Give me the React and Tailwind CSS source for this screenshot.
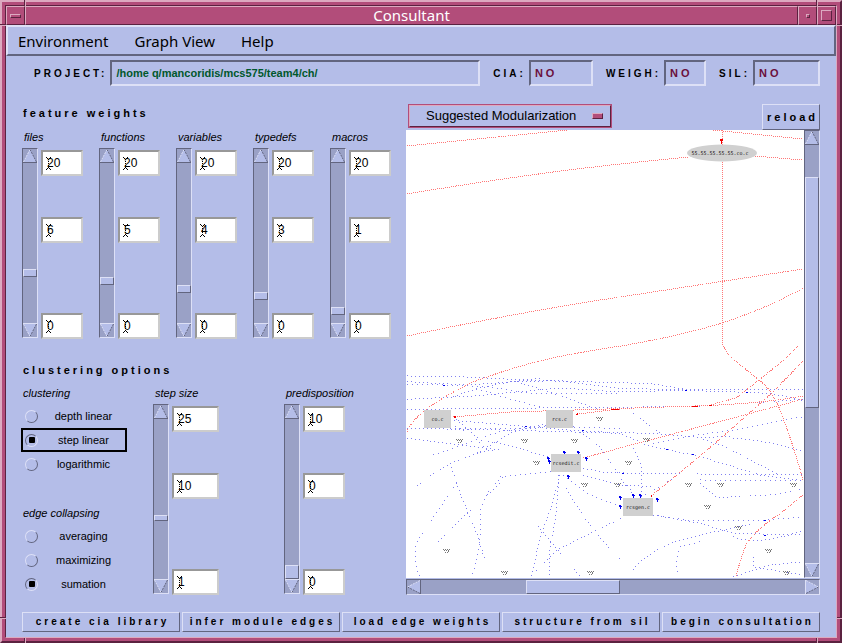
import React from "react";

const RAISED =
  "border-t-[#dde0f6] border-l-[#dde0f6] border-r-[#62657f] border-b-[#62657f]";
const SUNKEN =
  "border-t-[#62657f] border-l-[#62657f] border-r-[#dde0f6] border-b-[#dde0f6]";

const THUMB_H = {
  small: "[&::-webkit-slider-thumb]:h-[6px]",
  normal: "[&::-webkit-slider-thumb]:h-[8px]",
  large: "[&::-webkit-slider-thumb]:h-[14px]",
};

const THUMB =
  "appearance-none bg-transparent m-0 p-0 outline-none [&::-webkit-slider-thumb]:appearance-none [&::-webkit-slider-thumb]:rounded-none [&::-webkit-slider-thumb]:bg-[#b4bde8] [&::-webkit-slider-thumb]:border [&::-webkit-slider-thumb]:border-t-[#dde0f6] [&::-webkit-slider-thumb]:border-l-[#dde0f6] [&::-webkit-slider-thumb]:border-r-[#62657f] [&::-webkit-slider-thumb]:border-b-[#62657f]";

const ROTATE = { up: 0, down: 180, left: -90, right: 90 };

function Stepper({ dir, label }) {
  const light = "#dde0f6";
  const dark = "#62657f";
  const edges = {
    up: [light, dark, dark],
    down: [dark, light, light],
    left: [dark, light, dark],
    right: [light, dark, light],
  }[dir];
  return (
    <button type="button" aria-label={label} className="block h-[14px] w-[14px] shrink-0">
      <svg viewBox="0 0 14 14" className="block h-[14px] w-[14px]">
        <g transform={`rotate(${ROTATE[dir]} 7 7)`}>
          <path d="M7 0L13.5 13.5H0.5Z" fill="#b4bde8" />
          <path d="M0.5 13L7 0.5" stroke={edges[0]} strokeDasharray="2 1" fill="none" />
          <path d="M7 0.5L13.5 13" stroke={edges[1]} strokeDasharray="2 1" fill="none" />
          <path d="M0 13.5H14" stroke={edges[2]} fill="none" />
        </g>
      </svg>
    </button>
  );
}

function VerticalScale({ id, label, min, max, value, thumb }) {
  return (
    <div className={`flex h-[190px] w-4 flex-col items-center border bg-[#9aa1c6] ${SUNKEN}`}>
      <Stepper dir="up" label={`Increase ${label}`} />
      <input
        id={id}
        type="range"
        min={min}
        max={max}
        defaultValue={value}
        className={`min-h-0 w-[14px] flex-1 [direction:rtl] [writing-mode:vertical-lr] [&::-webkit-slider-thumb]:w-[14px] ${THUMB} ${THUMB_H[thumb]}`}
      />
      <Stepper dir="down" label={`Decrease ${label}`} />
    </div>
  );
}

function NumberField({ value, label, wide }) {
  return (
    <div className="relative">
      <input
        type="text"
        aria-label={label}
        defaultValue={value}
        className={`block h-[26px] border-2 border-t-[#989898] border-r-[#cccccc] border-b-[#cccccc] border-l-[#989898] bg-white pl-1 text-[12px] leading-4 text-black outline-none ${wide ? "w-[47px]" : "w-[42px]"}`}
      />
      <svg viewBox="0 0 5 13" className="pointer-events-none absolute top-[7px] left-[5px] h-[13px] w-[5px]" shapeRendering="crispEdges">
        <path d="M0 .5H1M1 1.5H2M3 1.5H4M4 .5H5M0 12.5H1M1 11.5H2M3 11.5H4M4 12.5H5" stroke="#000" />
        <path d="M2.5 2V12" stroke="#000" strokeDasharray="1 1" />
      </svg>
    </div>
  );
}

function Scale({ name, min, max, value, thumb = "normal", wide }) {
  const id = `scale-${name.replace(" ", "-")}`;
  return (
    <div className="flex flex-col">
      <label htmlFor={id} className="mb-[3px] block h-4 pl-0.5 text-[11px] leading-4 italic">
        {name}
      </label>
      <div className="flex gap-[3px]">
        <VerticalScale id={id} label={name} min={min} max={max} value={value} thumb={thumb} />
        <div className="flex flex-col pt-0.5">
          <NumberField value={max} label={`${name} maximum`} wide={wide} />
          <div className="h-[41px]" />
          <NumberField value={value} label={`${name} value`} wide={wide} />
          <div className="h-[70px]" />
          <NumberField value={min} label={`${name} minimum`} wide={wide} />
        </div>
      </div>
    </div>
  );
}

function RadioGroup({ legend, name, options, selected, focused }) {
  return (
    <fieldset>
      <legend className="block h-4 pl-0.5 text-[11px] leading-4 italic">{legend}</legend>
      <div className="mt-[3px]">
        {options.map((option) => (
          <label
            key={option}
            className={`flex h-6 w-[106px] items-center border-2 pl-0.5 text-[11px] ${option === focused ? "border-black" : "border-transparent"}`}
          >
            <input
              type="radio"
              name={name}
              defaultChecked={option === selected}
              className="m-0 grid h-[13px] w-[13px] shrink-0 appearance-none place-items-center rounded-full border border-t-[#dde0f6] border-r-[#62657f] border-b-[#62657f] border-l-[#dde0f6] checked:border-t-[#62657f] checked:border-r-[#dde0f6] checked:border-b-[#dde0f6] checked:border-l-[#62657f] checked:before:h-[6px] checked:before:w-[6px] checked:before:rounded-[1px] checked:before:bg-black"
            />
            <span className="flex-1 pl-1 text-center">{option}</span>
          </label>
        ))}
      </div>
    </fieldset>
  );
}

function Status({ id, label, value, className }) {
  return (
    <div className="flex items-center">
      <label htmlFor={id} className="pr-[3px] text-[10px] font-bold tracking-[3px]">
        {label}
      </label>
      <input
        id={id}
        readOnly
        defaultValue={value}
        className={`h-[26px] border-2 bg-transparent pl-1 text-[11px] font-bold tracking-[3px] text-[#6b0f3c] outline-none ${SUNKEN} ${className}`}
      />
    </div>
  );
}

const RED_EDGES = [
  "M407 146L567 130",
  "M407 194Q520 175 620 164L688 157M755 156L803 160",
  "M713 130L803 139",
  "M722 130V340Q723 350 733 359L759 380Q770 388 778 405Q792 440 803 480",
  "M407 336Q520 312 620 297L803 269",
  "M803 288Q770 307 722 323Q680 336 621 346Q580 352 548 359Q510 368 473 382Q415 410 407 432",
  "M798 346L785 359L759 380L736 398L710 405",
  "M803 361L773 392L728 432L699 457L651 496",
  "M453 417L510 412L606 409L694 406Q760 404 803 396",
  "M577 414L620 409",
  "M583 458L620 448L778 406L803 399",
  "M803 495L781 513Q755 530 746 545Q740 560 736 577",
];

// Drawn at three units to the pixel, from the point (400, 360) of the graph.
const BLUE_EDGES = [
  "M20 48L170 50L420 62L663 68L760 72L860 88",
  "M20 65L200 75L340 65L480 62L660 85L780 88L1210 88",
  "M20 75L130 75L260 80L400 102L663 100",
  "M20 118L220 108L480 84L663 96L850 91L1040 97Q1150 100 1210 125",
  "M20 150L160 146L663 142L900 138L1100 126L1210 118",
  "M200 75Q330 120 420 140",
  "M350 65Q480 105 600 150",
  "M150 180L330 195L560 215L663 217L780 222L900 232L1000 230",
  "M150 205L410 205L500 180",
  "M20 235L100 245L300 270",
  "M230 280L340 215L440 190",
  "M100 285L300 215L400 200L660 205",
  "M20 205L300 210L660 220L740 255L900 290L1080 345L1210 362",
  "M520 200L600 260L680 380L700 405",
  "M300 350L460 335",
  "M550 325L620 338L840 342",
  "M890 342L1210 345",
  "M900 360L1210 362",
  "M480 345Q460 430 420 530L395 650",
  "M475 345Q475 450 450 560V650",
  "M490 345L560 400L650 435",
  "M500 385Q560 500 663 600",
  "M310 380L390 470L540 650",
  "M310 350Q240 400 240 480Q245 570 215 650",
  "M150 310L180 400L230 520L255 600",
  "M300 370L180 480L115 545",
  "M170 370L60 530Q30 580 60 650",
  "M280 270Q120 300 20 410",
  "M663 475L470 570L400 640",
  "M760 465L860 480L1080 482L1210 470",
  "M760 465L900 490L1000 520L1210 525",
  "M690 640Q750 560 880 530L1060 490",
  "M900 545L840 560L830 600L832 640",
  "M1000 650L1110 615L1210 605",
  "M1060 590V620L1210 645",
  "M760 250L860 230L1000 210L1130 185L1210 170",
  "M1000 235Q1100 240 1210 275",
  "M900 370L950 412L1030 410",
  "M1050 408L1130 403L1210 385",
  "M700 160L780 220",
  "M700 265L725 320V400",
  "M663 350L700 400",
  "M160 170L240 240L300 250L445 290",
  "M1130 340Q1050 300 980 262L900 235",
  "M670 440L760 390L830 350",
  "M1000 530Q1080 560 1210 510",
  "M160 110Q260 70 420 55",
  "M150 190Q230 230 260 270",
  "M550 345L660 375L760 380",
];

const BLUE_MARKS = [
  [563, 451], [577, 451], [547, 457], [548, 460], [585, 457], [567, 475], [632, 494],
  [639, 494], [656, 498], [619, 496], [619, 505],
];

const BLUE_DASHES = [
  [443, 385], [525, 426], [685, 390], [746, 392], [692, 454], [764, 535], [764, 520],
  [582, 430], [666, 449], [622, 473],
];

const SPECKS = [
  [459, 441], [524, 441], [574, 441], [599, 419], [536, 463], [584, 485], [617, 485],
  [646, 440], [628, 463], [688, 485], [720, 485], [707, 507], [738, 528], [768, 551],
  [786, 573], [793, 485], [446, 551], [504, 573], [590, 573],
];

const BOXES = [
  { x: 424, y: 410, w: 27, h: 18, text: "co.c" },
  { x: 546, y: 410, w: 27, h: 18, text: "rcs.c" },
  { x: 551, y: 454, w: 30, h: 18, text: "rcsedit.c" },
  { x: 623, y: 498, w: 30, h: 18, text: "rcsgen.c" },
];

function Graph() {
  return (
    <svg
      viewBox="406 130 398 448"
      preserveAspectRatio="xMidYMid slice"
      className="block h-[448px] min-w-0 flex-1 bg-white"
      role="img"
      aria-label="Module dependency graph"
    >
      <g fill="none" stroke="#8080f0" strokeWidth="3" shapeRendering="crispEdges" transform="translate(400 360) scale(0.333333)">
        {BLUE_EDGES.map((d, i) => (
          <path key={d} d={d} strokeDasharray={i % 3 === 2 ? "3 12" : "3 9"} />
        ))}
      </g>
      <g fill="none" stroke="#ff7878" strokeWidth="1" strokeDasharray="1 1" shapeRendering="crispEdges">
        {RED_EDGES.map((d) => (
          <path key={d} d={d} />
        ))}
      </g>
      <g fill="#0000f0" shapeRendering="crispEdges">
        {BLUE_MARKS.map(([x, y]) => (
          <path key={`${x}-${y}`} d={`M${x} ${y}h2v1h1v1h-1v2h-1v-2h-1z`} />
        ))}
        {BLUE_DASHES.map(([x, y]) => (
          <path key={`${x}-${y}`} d={`M${x} ${y}h2v1h-2z`} />
        ))}
      </g>
      <g fill="#f00000" shapeRendering="crispEdges">
        <path d="M720 139h3v2h-1v3h-1v-3h-1zM452 417l4 -1v2zM575 415l3 -2v2zM650 496l2 -1v2zM611 409h8v1h-8zM692 406h6v1h-6zM709 405h3v1h-3z" />
      </g>
      <g fill="#d0d0d0">
        <ellipse cx="722" cy="153" rx="35" ry="8.5" />
        {BOXES.map((b) => (
          <rect key={b.text} x={b.x} y={b.y} width={b.w} height={b.h} />
        ))}
      </g>
      <g className="font-['DejaVu_Sans_Mono',monospace] text-[5px]" fill="#111" textAnchor="middle">
        <text x="720" y="155">55.55.55.55.55.co.c</text>
        {BOXES.map((b) => (
          <text key={b.text} x={b.x + b.w / 2} y={b.y + 11}>
            {b.text}
          </text>
        ))}
      </g>
      <g stroke="#777" strokeWidth="1" shapeRendering="crispEdges" fill="none" strokeDasharray="1 1">
        {SPECKS.map(([x, y]) => (
          <path key={`${x}-${y}`} d={`M${x - 3} ${y - 1.5}h7M${x - 2} ${y - 0.5}h5M${x + 2} ${y + 0.5}h2M${x - 1} ${y + 1.5}h4`} />
        ))}
      </g>
    </svg>
  );
}

const FEATURES = [
  { name: "files", value: 6 },
  { name: "functions", value: 5 },
  { name: "variables", value: 4 },
  { name: "typedefs", value: 3 },
  { name: "macros", value: 1 },
];

const ACTIONS = [
  "create cia library",
  "infer module edges",
  "load edge weights",
  "structure from sil",
  "begin consultation",
];

const TITLE_BUTTON =
  "grid h-[19px] w-[19px] place-items-center border border-t-[#dcaac0] border-l-[#dcaac0] border-r-[#5b2240] border-b-[#5b2240]";

function TitleBar() {
  return (
    <header className="flex h-[19px] bg-[#b24d7a] text-white">
      <button type="button" aria-label="Window menu" className={TITLE_BUTTON}>
        <span className="block h-1 w-[11px] border border-t-[#dcaac0] border-r-[#5b2240] border-b-[#5b2240] border-l-[#dcaac0]" />
      </button>
      <h1 className="flex-1 border border-t-[#dcaac0] border-r-[#5b2240] border-b-[#5b2240] border-l-[#dcaac0] text-center font-['Noto_Sans',sans-serif] text-[15px] leading-[17px]">
        Consultant
      </h1>
      <button type="button" aria-label="Minimize" className={TITLE_BUTTON}>
        <span className="block h-1 w-1 border border-t-[#dcaac0] border-r-[#5b2240] border-b-[#5b2240] border-l-[#dcaac0]" />
      </button>
      <button type="button" aria-label="Maximize" className={TITLE_BUTTON}>
        <span className="block h-[11px] w-[11px] border border-t-[#dcaac0] border-r-[#5b2240] border-b-[#5b2240] border-l-[#dcaac0]" />
      </button>
    </header>
  );
}

export default function App() {
  return (
    <div className="relative flex min-h-screen flex-col border-2 border-t-[#dcaac0] border-r-[#5b2240] border-b-[#5b2240] border-l-[#dcaac0] bg-[#b24d7a] p-[3px] font-['Liberation_Sans',Arial,sans-serif] text-black">
      <span className="absolute top-[-2px] left-[22px] h-[6px] w-0.5 border-r border-l border-r-[#dcaac0] border-l-[#5b2240]" />
      <span className="absolute top-[-2px] right-[22px] h-[6px] w-0.5 border-r border-l border-r-[#dcaac0] border-l-[#5b2240]" />
      <span className="absolute bottom-[-2px] left-[22px] h-[5px] w-0.5 border-r border-l border-r-[#dcaac0] border-l-[#5b2240]" />
      <span className="absolute right-[22px] bottom-[-2px] h-[5px] w-0.5 border-r border-l border-r-[#dcaac0] border-l-[#5b2240]" />
      <span className="absolute top-[22px] left-[-2px] h-0.5 w-[6px] border-t border-b border-t-[#5b2240] border-b-[#dcaac0]" />
      <span className="absolute top-[22px] right-[-2px] h-0.5 w-[5px] border-t border-b border-t-[#5b2240] border-b-[#dcaac0]" />
      <span className="absolute bottom-[22px] left-[-2px] h-0.5 w-[6px] border-t border-b border-t-[#5b2240] border-b-[#dcaac0]" />
      <span className="absolute right-[-2px] bottom-[22px] h-0.5 w-[5px] border-t border-b border-t-[#5b2240] border-b-[#dcaac0]" />

      <div className="flex flex-1 flex-col border border-t-[#5b2240] border-r-[#dcaac0] border-b-[#dcaac0] border-l-[#5b2240] bg-[#b4bde8]">
        <TitleBar />
        <nav className={`flex h-[31px] items-center gap-[26px] border-2 pl-[10px] font-['Noto_Sans',sans-serif] text-[15px] leading-5 ${RAISED}`}>
          <button type="button">Environment</button>
          <button type="button">Graph View</button>
          <button type="button">Help</button>
        </nav>

        <div className="mt-1 flex items-center gap-[13px] pr-4 pl-7">
          <div className="flex flex-1 items-center">
            <label htmlFor="project" className="pr-[3px] text-[10px] font-bold tracking-[3px]">
              PROJECT:
            </label>
            <input
              id="project"
              defaultValue="/home q/mancoridis/mcs575/team4/ch/"
              className={`h-[26px] min-w-0 flex-1 border-2 bg-transparent pl-1 text-[11px] font-bold text-[#00582c] outline-none ${SUNKEN}`}
            />
          </div>
          <Status id="cia" label="CIA:" value="NO" className="w-16" />
          <Status id="weigh" label="WEIGH:" value="NO" className="w-[42px]" />
          <Status id="sil" label="SIL:" value="NO" className="w-[67px]" />
        </div>

        <main className="mt-[18px] flex pr-4">
          <div className="w-[400px] shrink-0 pl-4">
            <h2 className="h-[18px] pl-px text-[11px] leading-[18px] font-bold tracking-[3px]">feature weights</h2>
            <div className="mt-[7px] grid w-[385px] grid-cols-5">
              {FEATURES.map((f) => (
                <Scale key={f.name} name={f.name} min={0} max={20} value={f.value} />
              ))}
            </div>
            <h2 className="mt-[22px] h-[18px] pl-px text-[11px] leading-[18px] font-bold tracking-[3px]">
              clustering options
            </h2>
            <div className="mt-[6px] flex">
              <div className="-ml-px flex w-[132px] flex-col gap-[29px]">
                <RadioGroup
                  legend="clustering"
                  name="clustering"
                  options={["depth linear", "step linear", "logarithmic"]}
                  selected="step linear"
                  focused="step linear"
                />
                <RadioGroup
                  legend="edge collapsing"
                  name="edge-collapsing"
                  options={["averaging", "maximizing", "sumation"]}
                  selected="sumation"
                />
              </div>
              <div className="w-[131px]">
                <Scale name="step size" min={1} max={25} value={10} thumb="small" wide />
              </div>
              <Scale name="predisposition" min={0} max={10} value={0} thumb="large" />
            </div>
          </div>

          <div className="flex min-w-0 flex-1 flex-col">
            <div className="flex items-end justify-between">
              <div className="relative mb-0.5 ml-0.5 w-[204px] border border-[#b24d7a]">
                <select
                  aria-label="Graph view"
                  className="block h-[22px] w-full appearance-none border border-t-[#dcaac0] border-r-[#5b2240] border-b-[#5b2240] border-l-[#dcaac0] bg-transparent pl-4 text-[13px] leading-5 outline-none"
                >
                  <option>Suggested Modularization</option>
                </select>
                <span className="pointer-events-none absolute top-2 right-2 h-[6px] w-[11px] border border-t-[#dcaac0] border-r-[#5b2240] border-b-[#5b2240] border-l-[#dcaac0] bg-[#b24d7a]" />
              </div>
              <button type="button" className={`h-[26px] w-[58px] border pl-[3px] text-[11px] font-bold tracking-[3px] ${RAISED}`}>
                reload
              </button>
            </div>
            <div className="flex">
              <Graph />
              <div className={`flex w-4 flex-col items-center border bg-[#9aa1c6] ${SUNKEN}`}>
                <Stepper dir="up" label="Scroll up" />
                <input
                  type="range"
                  aria-label="Vertical scroll"
                  min={0}
                  max={1000}
                  defaultValue={170}
                  className={`min-h-0 w-[14px] flex-1 [writing-mode:vertical-lr] [&::-webkit-slider-thumb]:h-[231px] [&::-webkit-slider-thumb]:w-[14px] ${THUMB}`}
                />
                <Stepper dir="down" label="Scroll down" />
              </div>
            </div>
            <div className={`mt-px flex h-4 items-center border bg-[#9aa1c6] ${SUNKEN}`}>
              <Stepper dir="left" label="Scroll left" />
              <input
                type="range"
                aria-label="Horizontal scroll"
                min={0}
                max={1000}
                defaultValue={362}
                className={`h-[14px] min-w-0 flex-1 [&::-webkit-slider-thumb]:h-[14px] [&::-webkit-slider-thumb]:w-[94px] ${THUMB}`}
              />
              <Stepper dir="right" label="Scroll right" />
            </div>
          </div>
        </main>

        <footer className="mt-auto grid grid-cols-5 gap-0.5 px-4 pt-2 pb-[5px]">
          {ACTIONS.map((action) => (
            <button
              key={action}
              type="button"
              className={`h-5 border pl-[3px] text-[10px] leading-[18px] font-bold tracking-[3px] whitespace-nowrap ${RAISED}`}
            >
              {action}
            </button>
          ))}
        </footer>
      </div>
    </div>
  );
}
